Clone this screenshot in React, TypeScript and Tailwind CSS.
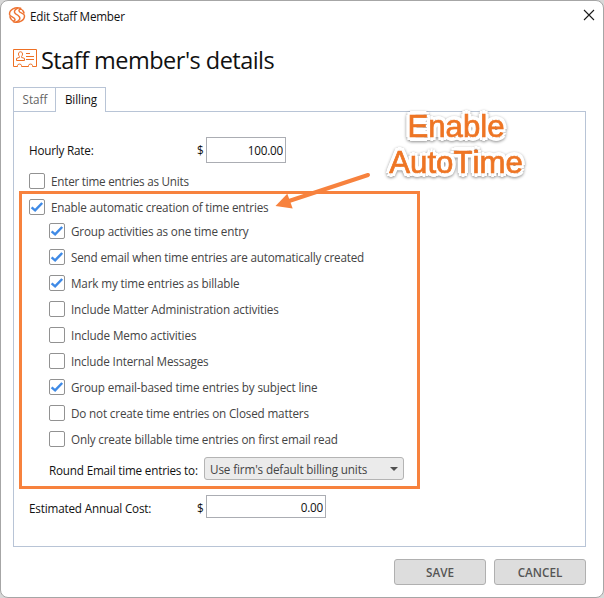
import { FC, useState } from 'react';

const LogoIcon: FC = () => (
  <svg width="18" height="18" viewBox="0 0 18 18" fill="none" stroke="#ee7433" strokeWidth="1.5" strokeLinecap="round">
    <path d="M12.6 2.2C7 .4 1.4 3.6 1.5 8.2C1.6 11 6.6 10.6 7 13.4C7.2 14.8 5.8 15.2 4.6 14.6" />
    <path d="M5.4 15.8C11 17.6 16.6 14.4 16.5 9.8C16.4 7 11.6 7.4 11 4.8C10.8 3.6 12 2.8 13.4 3.4" />
    <path d="M9.6 2.2C6 3.6 5.4 6.6 8 8.2C11 9.8 12.6 11.2 11.6 13.4C11 14.8 9.6 15.6 8.2 16" />
    <path d="M2 10.8C2.2 12 2.8 13 3.6 13.8M14.6 4.4C15.4 5.2 15.8 6 16 7" />
  </svg>
);

const StaffCardIcon: FC = () => (
  <svg width="24" height="18" viewBox="0 0 24 18" fill="none" stroke="#ee7024">
    <path d="M.5 .5H23.5V17.5H19.5V16.5C19.5 14.6 15.5 14.6 15.5 16.5V17.5H8.5V16.5C8.5 14.6 4.5 14.6 4.5 16.5V17.5H.5Z" />
    <path d="M5.5 5C5.5 2 9.5 2 9.5 5C9.5 6.4 8.8 7.2 8.5 7.6V8.4L11.5 9.4V11.5H3.5V9.4L6.5 8.4V7.6C6.2 7.2 5.5 6.4 5.5 5Z" />
    <path d="M13 4.5H17M13 7.5H21M13 10.5H21" />
  </svg>
);

type CheckRowProps = {
  label: string;
  checked: boolean;
  tracking: string;
  onChange: () => void;
};

const CheckRow: FC<CheckRowProps> = ({ label, checked, tracking, onChange }) => (
  <label className="flex h-[26px] items-center gap-1.5 text-[#444444]">
    <input type="checkbox" className="sr-only" checked={checked} onChange={onChange} />
    <span className="flex size-4 shrink-0 items-center justify-center rounded-[2px] border border-[#929292] bg-white">
      {checked && (
        <svg width="14" height="14" viewBox="0 0 14 14" fill="none" stroke="#3f8ae6" strokeWidth="2.5">
          <path d="M1.6 7.4L5.1 10.4L12.2 3" />
        </svg>
      )}
    </span>
    <span className={`whitespace-nowrap ${tracking}`}>{label}</span>
  </label>
);

const App: FC = () => {
  const [units, setUnits] = useState(false);
  const [autoTime, setAutoTime] = useState(true);
  const [options, setOptions] = useState([
    { label: 'Group activities as one time entry', checked: true, tracking: 'tracking-[-0.16px]' },
    { label: 'Send email when time entries are automatically created', checked: true, tracking: 'tracking-[-0.18px]' },
    { label: 'Mark my time entries as billable', checked: true, tracking: 'tracking-[-0.15px]' },
    { label: 'Include Matter Administration activities', checked: false, tracking: 'tracking-[-0.15px]' },
    { label: 'Include Memo activities', checked: false, tracking: 'tracking-[-0.12px]' },
    { label: 'Include Internal Messages', checked: false, tracking: 'tracking-[-0.17px]' },
    { label: 'Group email-based time entries by subject line', checked: true, tracking: 'tracking-[-0.15px]' },
    { label: 'Do not create time entries on Closed matters', checked: false, tracking: 'tracking-[-0.16px]' },
    { label: 'Only create billable time entries on first email read', checked: false, tracking: 'tracking-[-0.16px]' },
  ]);

  const toggleOption = (index: number) => {
    setOptions(options.map((o, i) => (i === index ? { ...o, checked: !o.checked } : o)));
  };

  return (
    <div className="h-[598px] w-[604px] overflow-hidden bg-[#d8d8d8] font-['Open_Sans',sans-serif] text-[11.7px] leading-4 text-[#111111]">
      <div className="relative flex h-full flex-col rounded-[8px] border border-[#a6a6a6] bg-white">
        {/* Title bar */}
        <div className="flex h-[28px] items-center pl-[7px] pr-2">
          <LogoIcon />
          <span className="ml-1 grow pt-px tracking-[-0.2px]">Edit Staff Member</span>
          <button aria-label="Close">
            <svg width="12" height="12" viewBox="0 0 12 12" stroke="#1a1a1a" strokeWidth="1.1">
              <path d="M1 1L11 11M11 1L1 11" />
            </svg>
          </button>
        </div>

        {/* Heading */}
        <div className="flex h-[58px] items-center pl-3">
          <StaffCardIcon />
          <h1 className="ml-1 mt-1 whitespace-nowrap text-[23.5px] leading-8 tracking-[-0.52px]">Staff member's details</h1>
        </div>

        {/* Tabs */}
        <div className="z-10 ml-3 flex h-6 text-center">
          <button className="w-[43px] border border-b-0 border-[#b8c4d6] pb-0.5 pl-px text-[#666666]">Staff</button>
          <button className="-ml-px -mb-px w-[51px] border border-b-0 border-[#b8c4d6] bg-white pb-0.5 pl-px tracking-[-0.1px]">Billing</button>
        </div>

        <div className="ml-3 flex h-[436px] w-[573px] flex-col border border-[#b8c4d6] pl-[5px] pt-[25px]">
          <div className="flex h-[26px] items-center pl-[10px]">
            <span className="w-[168px] tracking-[-0.2px]">Hourly Rate:</span>
            <span className="w-[9px]">$</span>
            <input className="h-[26px] w-20 border border-[#abadb3] px-0.5 text-right tracking-[-0.2px]" defaultValue="100.00" />
          </div>
          <div className="mt-[5px] pl-[10px]">
            <CheckRow label="Enter time entries as Units" tracking="tracking-[-0.23px]" checked={units} onChange={() => setUnits(!units)} />
          </div>

          {/* Highlighted section */}
          <div className="-mt-[3px] h-[298px] w-[401px] border-[3px] border-[#f7823e] pl-[7px]">
            <CheckRow label="Enable automatic creation of time entries" tracking="tracking-[-0.18px]" checked={autoTime} onChange={() => setAutoTime(!autoTime)} />
            <div className="-mt-0.5 pl-5">
              {options.map((option, i) => (
                <CheckRow key={option.label} {...option} onChange={() => toggleOption(i)} />
              ))}
              <div className="mt-[5px] flex h-[23px] items-center">
                <span className="w-[155px] whitespace-nowrap pt-0.5 tracking-[-0.19px]">Round Email time entries to:</span>
                <button className="flex h-[23px] w-[200px] items-center justify-between rounded-[3px] border border-[#b4b4b4] bg-[#ebebeb] px-[5px] text-[#444444]">
                  <span className="whitespace-nowrap tracking-[-0.13px]">Use firm's default billing units</span>
                  <svg width="8" height="4" viewBox="0 0 8 4" fill="#505050">
                    <path d="M0 0H8L4 4Z" />
                  </svg>
                </button>
              </div>
            </div>
          </div>

          <div className="mt-1.5 flex h-[23px] items-center pl-[10px]">
            <span className="w-[168px] whitespace-nowrap pt-0.5 tracking-[-0.17px]">Estimated Annual Cost:</span>
            <span className="w-[9px] pt-0.5">$</span>
            <input className="h-[23px] w-[120px] border border-[#abadb3] px-0.5 text-right tracking-[-0.2px]" defaultValue="0.00" />
          </div>
        </div>

        {/* Footer */}
        <div className="mr-[17px] mt-3 flex justify-end gap-2 font-semibold text-[#555555]">
          <button className="h-[26px] w-[92px] rounded-[3px] border border-[#b0b0b0] bg-[#dddddd]">SAVE</button>
          <button className="h-[26px] w-[92px] rounded-[3px] border border-[#b0b0b0] bg-[#dddddd]">CANCEL</button>
        </div>

        {/* Callout */}
        <svg className="absolute left-[269px] top-[164px] z-20" width="110" height="50" viewBox="270 165 110 50">
          <path d="M368 175L289 201" stroke="#f7823e" strokeWidth="4" strokeLinecap="round" />
          <path d="M275.5 206L287.3 193.8L292.7 208.5Z" fill="#f7823e" />
        </svg>
        <div className="absolute left-[380px] top-[108px] z-20 w-[150px] text-center font-['Liberation_Sans',sans-serif] text-[31.2px] leading-[36px] text-[#ee7524] drop-shadow-[0_1px_1.5px_rgba(0,0,0,0.45)] [-webkit-text-stroke:0.7px_#ee7524] [font-kerning:none] [text-shadow:3.6px_0_#fff,-3.6px_0_#fff,0_3.6px_#fff,0_-3.6px_#fff,2.6px_2.6px_#fff,-2.6px_2.6px_#fff,2.6px_-2.6px_#fff,-2.6px_-2.6px_#fff]">
          Enable
          <br />
          AutoTime
        </div>
      </div>
    </div>
  );
};

export default App;
